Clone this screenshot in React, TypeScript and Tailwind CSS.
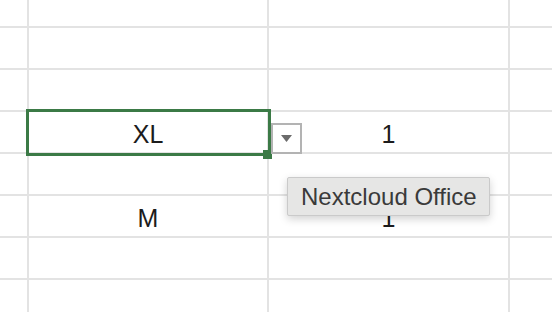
import React from "react";

const rows: { b: string; c: string; h: number }[] = [
  { b: "", c: "", h: 26 },
  { b: "", c: "", h: 40 },
  { b: "", c: "", h: 40 },
  { b: "XL", c: "1", h: 40 },
  { b: "", c: "", h: 40 },
  { b: "M", c: "1", h: 40 },
  { b: "", c: "", h: 40 },
  { b: "", c: "", h: 40 },
];

export default function App() {
  return (
    <div
      className="relative w-[552px] h-[312px] overflow-hidden bg-white"
      style={{ fontFamily: '"Liberation Sans", Arial, sans-serif' }}
    >
      <div className="flex flex-col">
        {rows.map((r, i) => (
          <div
            key={i}
            className={`flex ${i < rows.length - 1 ? "border-b-2 border-[#e3e3e3]" : ""}`}
            style={{ height: r.h + (i < rows.length - 1 ? 2 : 0) }}
          >
            <div className="w-[29px] shrink-0 border-r-2 border-[#e3e3e3]" />
            <div className="w-[240px] shrink-0 border-r-2 border-[#e3e3e3] flex items-center justify-center text-[25px] text-[#1c1c1c] pt-[5px]">
              {r.b}
            </div>
            <div className="w-[241px] shrink-0 border-r-2 border-[#e3e3e3] flex items-center justify-center text-[25px] text-[#1c1c1c] pt-[5px]">
              {r.c}
            </div>
            <div className="flex-1" />
          </div>
        ))}
      </div>

      {/* selection */}
      <div className="absolute left-[26px] top-[109px] w-[245px] h-[47px] border-[3px] border-[#3b7a46]" />
      <div className="absolute left-[263px] top-[150px] w-[9px] h-[9px] bg-[#3b7a46]" />

      {/* dropdown button */}
      <div className="absolute left-[271px] top-[123px] w-[31px] h-[31px] bg-white border-2 border-[#b3b3b3] flex items-center justify-center">
        <svg width="11" height="7" viewBox="0 0 11 7">
          <path d="M0 0 H11 L5.5 7 Z" fill="#6b6b6b" />
        </svg>
      </div>

      {/* tooltip */}
      <div className="absolute left-[287px] top-[177px] w-[203px] h-[39px] bg-[#e6e6e5] border border-[#cacaca] rounded-[2px] shadow-[0_3px_8px_rgba(0,0,0,0.18)] flex items-center pl-[13px] text-[24px] text-[#3a3a3a] whitespace-nowrap">
        Nextcloud Office
      </div>
    </div>
  );
}
